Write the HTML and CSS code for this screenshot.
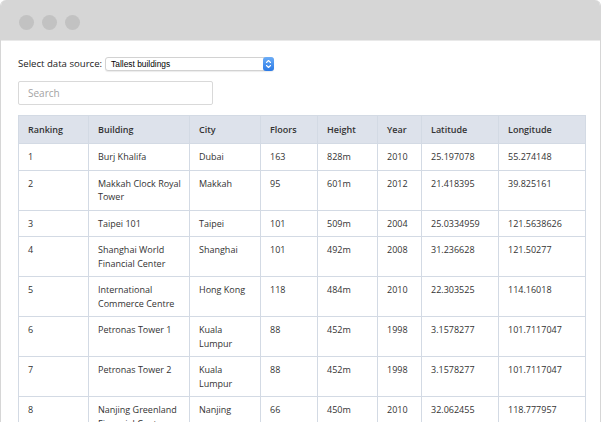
FILE: index.html
```html
<!DOCTYPE html>
<html lang="en">
<head>
<meta charset="utf-8">
<title>Tallest buildings</title>
<link rel="stylesheet" href="styles.css">
</head>
<body>
<div class="window">
  <div class="titlebar">
    <span class="dot"></span><span class="dot"></span><span class="dot"></span>
  </div>
  <div class="content">
    <div class="source-row">
      <span class="source-label">Select data source:</span>
      <div class="select">
        <span class="select-text">Tallest buildings</span>
        <span class="select-btn">
          <svg width="11" height="14" viewBox="0 0 11 14"><path d="M3.5 5.5 L5.5 3.5 L7.5 5.5 M3.5 8.5 L5.5 10.5 L7.5 8.5" fill="none" stroke="#fff" stroke-width="1.1" stroke-linecap="round" stroke-linejoin="round"/></svg>
        </span>
      </div>
    </div>
    <input class="search" type="text" placeholder="Search">
    <table class="data">
      <colgroup>
        <col class="c-rank"><col class="c-building"><col class="c-city"><col class="c-floors"><col class="c-height"><col class="c-year"><col class="c-lat"><col class="c-lon">
      </colgroup>
      <thead>
        <tr><th>Ranking</th><th>Building</th><th>City</th><th>Floors</th><th>Height</th><th>Year</th><th>Latitude</th><th>Longitude</th></tr>
      </thead>
      <tbody>
        <tr><td>1</td><td>Burj Khalifa</td><td>Dubai</td><td>163</td><td>828m</td><td>2010</td><td>25.197078</td><td>55.274148</td></tr>
        <tr><td>2</td><td>Makkah Clock Royal Tower</td><td>Makkah</td><td>95</td><td>601m</td><td>2012</td><td>21.418395</td><td>39.825161</td></tr>
        <tr><td>3</td><td>Taipei 101</td><td>Taipei</td><td>101</td><td>509m</td><td>2004</td><td>25.0334959</td><td>121.5638626</td></tr>
        <tr><td>4</td><td>Shanghai World Financial Center</td><td>Shanghai</td><td>101</td><td>492m</td><td>2008</td><td>31.236628</td><td>121.50277</td></tr>
        <tr><td>5</td><td>International Commerce Centre</td><td>Hong Kong</td><td>118</td><td>484m</td><td>2010</td><td>22.303525</td><td>114.16018</td></tr>
        <tr><td>6</td><td>Petronas Tower 1</td><td>Kuala Lumpur</td><td>88</td><td>452m</td><td>1998</td><td>3.1578277</td><td>101.7117047</td></tr>
        <tr><td>7</td><td>Petronas Tower 2</td><td>Kuala Lumpur</td><td>88</td><td>452m</td><td>1998</td><td>3.1578277</td><td>101.7117047</td></tr>
        <tr><td>8</td><td>Nanjing Greenland Financial Center</td><td>Nanjing</td><td>66</td><td>450m</td><td>2010</td><td>32.062455</td><td>118.777957</td></tr>
      </tbody>
    </table>
  </div>
</div>
</body>
</html>
```

FILE: styles.css
```css
html, body {
  margin: 0;
  height: 422px;
  overflow: hidden;
  background: #fff;
}

.window {
  width: 601px;
  height: 422px;
  box-sizing: border-box;
  border-left: 1px solid #d6d6d6;
  border-right: 1px solid #d6d6d6;
  border-radius: 6px 6px 0 0;
  overflow: hidden;
  background: #fff;
}

.titlebar {
  height: 41px;
  box-sizing: border-box;
  background: #d6d6d6;
  border-bottom: 1px solid #e9e9e9;
  display: flex;
  gap: 8px;
  padding: 15px 0 0 18px;
}

.dot {
  width: 15px;
  height: 15px;
  border-radius: 50%;
  background: #c2c2c2;
}

.content {
  padding: 16px 15px 0 17px;
  font-family: "Open Sans", sans-serif;
  color: #333;
}

.source-row {
  display: flex;
  align-items: center;
  height: 14px;
}

.source-label {
  font-size: 9.6px;
  line-height: 14px;
  margin-right: 3px;
  color: #222;
}

.select {
  width: 169px;
  height: 14px;
  box-sizing: border-box;
  border: 1px solid #d2d2d2;
  border-radius: 3px;
  display: flex;
  align-items: center;
  justify-content: space-between;
  background: #fff;
  box-shadow: 0 1px 1px rgba(0, 0, 0, 0.08);
}

.select-text {
  font-family: "Liberation Sans", Arial, sans-serif;
  font-size: 8.4px;
  padding-left: 5px;
  color: #000;
}

.select-btn {
  display: flex;
  width: 11px;
  height: 14px;
  margin: -1px -1px -1px 0;
  border-radius: 3px;
  background: linear-gradient(#6cadf7, #2a79e6);
}

.search {
  display: block;
  margin-top: 10px;
  width: 195px;
  height: 24px;
  box-sizing: border-box;
  border: 1px solid #d9d9d9;
  border-radius: 2px;
  padding: 0 9px;
  font-family: "Open Sans", sans-serif;
  font-size: 10px;
  color: #333;
  outline: none;
}

.search::placeholder {
  color: #a3a3a3;
}

.data {
  margin-top: 10px;
  width: 567px;
  border-collapse: collapse;
  table-layout: fixed;
  font-family: "Open Sans", sans-serif;
  font-size: 9px;
  color: #333;
}

.c-rank { width: 70px; }
.c-building { width: 101px; }
.c-city { width: 71px; }
.c-floors { width: 57px; }
.c-height { width: 60px; }
.c-year { width: 44px; }
.c-lat { width: 77px; }
.c-lon { width: 87px; }

.data th,
.data td {
  border: 1px solid #d3dae4;
  padding: 6px 5px 6px 9px;
  line-height: 13.5px;
  text-align: left;
  vertical-align: top;
}

.data th {
  background: #dde2eb;
  font-weight: 600;
  padding: 7px 5px 7px 9px;
  line-height: 13px;
  color: #333;
}
```
